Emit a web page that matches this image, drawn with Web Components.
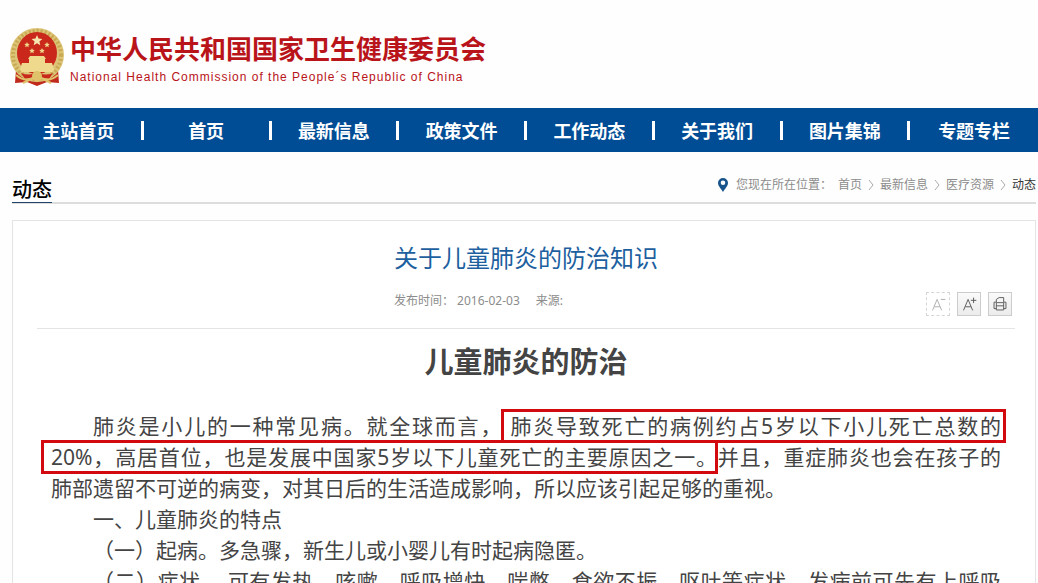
<!DOCTYPE html>
<html lang="zh-CN">
<head>
<meta charset="utf-8">
<meta name="viewport" content="width=device-width, initial-scale=1">
<title>关于儿童肺炎的防治知识</title>
<style>
    :root {
        --color-brand: #004c95;
        --color-red: #b9141a;
        --color-mark: #d20a10;
        --color-title: #1d5f9f;
        --color-text: #444;
        --color-muted: #8c8c8c;
        --color-border: #e4e4e4;
    }
    body {
        margin: 0;
        height: 100vh;
        overflow: hidden;
        background: #fefefe;
        color: var(--color-text);
        font-family: "Noto Sans", "Noto Sans CJK SC", sans-serif;
    }
    main {
        padding: 0 2px 0 12px;
    }
</style>
</head>
<body>
<site-header>
    <span slot="name">中华人民共和国国家卫生健康委员会</span>
    <span slot="subtitle">National Health Commission of the People´s Republic of China</span>
</site-header>

<site-nav items="主站首页,首页,最新信息,政策文件,工作动态,关于我们,图片集锦,专题专栏"></site-nav>

<main>
    <section-bar heading="动态">
        <crumb-trail items="首页,最新信息,医疗资源,动态"></crumb-trail>
    </section-bar>

    <article-card>
        <span slot="title">关于儿童肺炎的防治知识</span>
        <span slot="published">发布时间： 2016-02-03</span>
        <span slot="source">来源:</span>
        <tool-button slot="tools" kind="smaller"></tool-button>
        <tool-button slot="tools" kind="larger"></tool-button>
        <tool-button slot="tools" kind="print"></tool-button>
        <article-body heading="儿童肺炎的防治">
            <text-block>肺炎是小儿的一种常见病。就全球而言，<marked-text>肺炎导致死亡的病例约占5岁以下小儿死亡总数的</marked-text><wbr><marked-text class="start"><keep-together>20%，高居</keep-together>首位，也是发展中国家5岁以下儿童死亡的主要原因之一。</marked-text>并且，重症肺炎也会在孩子的<keep-together>肺部遗留</keep-together>不可逆的病变，对其日后的生活造成影响，所以应该引起足够的重视。</text-block>
            <text-block>一、儿童肺炎的特点</text-block>
            <text-block>（一）起病。多急骤，新生儿或小婴儿有时起病隐匿。</text-block>
            <text-block fill>（二）症状。 可有发热、咳嗽、呼吸增快、喘憋、食欲不振、呕吐等症状，发病前可先有上呼吸</text-block>
        </article-body>
    </article-card>
</main>

<script>
class SiteHeader extends HTMLElement {
    constructor() {
        super();
        this.attachShadow({ mode: 'open' });
    }

    connectedCallback() {
        this.shadowRoot.innerHTML = `
            <style>
                :host {
                    display: block;
                }
                header {
                    display: flex;
                    align-items: center;
                    gap: 5px;
                    padding: 26px 9px 20px;
                    color: var(--color-red);
                }
                svg {
                    width: 56px;
                    height: 62px;
                }
                .names {
                    padding-top: 5px;
                }
                h1 {
                    margin: 0;
                    font: bold 26px/30px "Noto Sans CJK SC", sans-serif;
                }
                p {
                    margin: 4px 0 0;
                    font: 12px/20px "Liberation Sans", sans-serif;
                    letter-spacing: 1px;
                }
            </style>
            <header>
                <svg viewBox="0 0 56 62" aria-hidden="true">
                    <path d="M7 44 L6 57 L18 56 L28 60 L38 56 L50 57 L49 44Z" fill="#c02a1c"/>
                    <ellipse cx="28" cy="29" rx="27" ry="27" fill="#dcc478"/>
                    <ellipse cx="28" cy="29" rx="24" ry="24" fill="none" stroke="#c9aa52" stroke-width="4" stroke-dasharray="2 2"/>
                    <ellipse cx="28" cy="27" rx="20" ry="21" fill="#c9281b"/>
                    <path d="M28 9l1.5 3.6 3.9.3-3 2.5.9 3.8-3.3-2-3.3 2 .9-3.8-3-2.5 3.9-.3z" fill="#f6e7b0"/>
                    <g fill="#efd98c">
                        <path id="s" d="M18 16l.8 1.800 2 .2-1.500 1.300.5 2-1.800-1.100-1.800 1.100.5-2-1.500-1.300 2-.2z"/>
                        <use href="#s" x="20"/>
                        <use href="#s" x="5" y="6"/>
                        <use href="#s" x="15" y="6"/>
                        <path d="M21 30h14l2 3h-18zM20 33h16v4H20zM13 37h30l2 6H11z"/>
                        <path d="M10 43h36l-3 3H13z"/>
                    </g>
                    <path d="M12 47q8 3 13 0l3 2 3-2q5 3 13 0l-4 6-12-2-12 2z" fill="#c9281b"/>
                    <circle cx="28" cy="50" r="5" fill="#dfc269"/>
                    <path d="M7 49q8 7 17 3l4 3 4-3q9 4 17-3M14 57l8-4M42 57l-8-4" fill="none" stroke="#dfc269" stroke-width="2"/>
                </svg>
                <div class="names">
                    <h1><slot name="name"></slot></h1>
                    <p><slot name="subtitle"></slot></p>
                </div>
            </header>
        `;
    }
}

class SiteNav extends HTMLElement {
    constructor() {
        super();
        this.attachShadow({ mode: 'open' });
    }

    connectedCallback() {
        const items = this.getAttribute('items').split(',');
        this.shadowRoot.innerHTML = `
            <style>
                :host {
                    display: block;
                    background: var(--color-brand);
                    color: #fff;
                    font: bold 18px/44px "Noto Sans CJK SC", sans-serif;
                }
                ul {
                    display: grid;
                    grid-template-columns: repeat(${items.length}, 1fr);
                    margin: 0;
                    padding: 0 0 0 16px;
                    list-style: none;
                }
                li {
                    display: flex;
                    height: 44px;
                }
                a {
                    flex: 1;
                    color: inherit;
                    text-align: center;
                    text-decoration: none;
                }
                li:not(:last-child)::after {
                    content: "";
                    align-self: center;
                    width: 3px;
                    height: 19px;
                    background: #fff;
                }
            </style>
            <nav><ul>${items.map(item => `<li><a href="#">${item}</a></li>`).join('')}</ul></nav>
        `;
    }
}

class SectionBar extends HTMLElement {
    constructor() {
        super();
        this.attachShadow({ mode: 'open' });
    }

    connectedCallback() {
        this.shadowRoot.innerHTML = `
            <style>
                :host {
                    display: flex;
                    justify-content: space-between;
                    height: 50px;
                    border-bottom: 2px solid #ddd;
                }
                h2 {
                    align-self: flex-end;
                    margin: 0 0 -1px;
                    border-bottom: 1px solid #1f4468;
                    color: #000;
                    font: 500 20px/27px "Noto Sans CJK SC", sans-serif;
                }
            </style>
            <h2>${this.getAttribute('heading')}</h2>
            <slot></slot>
        `;
    }
}

class CrumbTrail extends HTMLElement {
    constructor() {
        super();
        this.attachShadow({ mode: 'open' });
    }

    connectedCallback() {
        const items = this.getAttribute('items').split(',');
        this.shadowRoot.innerHTML = `
            <style>
                :host {
                    display: block;
                    padding-top: 23px;
                    color: var(--color-muted);
                    font-size: 12px;
                    line-height: 20px;
                }
                nav, ol, li {
                    display: flex;
                    align-items: center;
                }
                ol {
                    margin: 0;
                    padding: 0;
                    list-style: none;
                }
                .pin {
                    width: 10px;
                    height: 14px;
                    margin-right: 8px;
                }
                .label {
                    margin-right: 6px;
                }
                .arrow {
                    width: 6px;
                    height: 10px;
                    margin: 0 6px;
                }
                a {
                    color: inherit;
                    text-decoration: none;
                }
                li:last-child {
                    color: #333;
                }
            </style>
            <nav>
                <svg class="pin" viewBox="0 0 10 14" aria-hidden="true">
                    <path fill-rule="evenodd" d="M5 0a5 5 0 0 1 5 5c0 3-3 5.500-5 9-2-3.500-5-6-5-9a5 5 0 0 1 5-5zm0 2.500a2.300 2.300 0 1 0 0 4.600 2.300 2.300 0 0 0 0-4.600z" fill="#17548c"/>
                </svg>
                <span class="label">您现在所在位置：</span>
                <ol>${items.map((item, i) => `<li>${i ? '<svg class="arrow" viewBox="0 0 6 10" aria-hidden="true"><path d="M1 0l4 5-4 5" fill="none" stroke="#aaa"/></svg>' : ''}<a href="#">${item}</a></li>`).join('')}</ol>
            </nav>
        `;
    }
}

class ArticleCard extends HTMLElement {
    constructor() {
        super();
        this.attachShadow({ mode: 'open' });
    }

    connectedCallback() {
        this.shadowRoot.innerHTML = `
            <style>
                :host {
                    display: block;
                    margin-top: 16px;
                    padding: 0 20px 0 24px;
                    border: 1px solid var(--color-border);
                    background: #fff;
                }
                header {
                    display: grid;
                    grid-template-columns: 1fr auto 1fr;
                    border-bottom: 1px solid var(--color-border);
                    padding: 18px 0 12px;
                }
                h1 {
                    grid-column: 2;
                    margin: 0;
                    color: var(--color-title);
                    font: 24px/36px "Noto Sans CJK SC", sans-serif;
                }
                .meta {
                    grid-column: 2;
                    display: flex;
                    gap: 16px;
                    padding: 16px 0 5px;
                    color: var(--color-muted);
                    font-size: 12px;
                    line-height: 20px;
                }
                .tools {
                    grid-column: 3;
                    display: flex;
                    justify-content: flex-end;
                    align-self: end;
                    gap: 7px;
                    padding-right: 3px;
                }
            </style>
            <article>
                <header>
                    <h1><slot name="title"></slot></h1>
                    <div class="meta"><slot name="published"></slot><slot name="source"></slot></div>
                    <div class="tools"><slot name="tools"></slot></div>
                </header>
                <slot></slot>
            </article>
        `;
    }
}

const TOOLS = {
    smaller: {
        label: '缩小字体',
        icon: '<path d="M6 19l5-12 5 12M8 15h6M15 7h5"/>'
    },
    larger: {
        label: '放大字体',
        icon: '<path d="M6 19l5-12 5 12M8 15h6M14 8h6M17 5v6"/>'
    },
    print: {
        label: '打印',
        icon: '<path d="M8 10V7l3-2h5v5M8 10H5.500v7H8M16 10h2.500v7H16M8 10.500h8v8H8zM8 14h8"/>'
    }
};

class ToolButton extends HTMLElement {
    constructor() {
        super();
        this.attachShadow({ mode: 'open' });
    }

    connectedCallback() {
        const tool = TOOLS[this.getAttribute('kind')];
        this.shadowRoot.innerHTML = `
            <style>
                :host {
                    display: block;
                }
                button {
                    display: block;
                    width: 24px;
                    height: 24px;
                    padding: 0;
                    border: 1px solid #ccc;
                    background: linear-gradient(#fafafa, #ececec);
                    color: #555;
                }
                svg {
                    display: block;
                    width: 22px;
                    height: 22px;
                    fill: none;
                    stroke: currentColor;
                }
                :host([kind="smaller"]) button {
                    border: 1px dashed #d5d5d5;
                    background: #fff;
                    color: #aaa;
                }
            </style>
            <button type="button" aria-label="${tool.label}"><svg viewBox="0 0 24 24">${tool.icon}</svg></button>
        `;
    }
}

class ArticleBody extends HTMLElement {
    constructor() {
        super();
        this.attachShadow({ mode: 'open' });
    }

    connectedCallback() {
        this.shadowRoot.innerHTML = `
            <style>
                :host {
                    display: block;
                    padding: 10px 14px 0;
                    font-size: 21px;
                    line-height: 31px;
                }
                h2 {
                    margin: 0 0 30px;
                    font: bold 29px/42px "Noto Sans CJK SC", sans-serif;
                    text-align: center;
                }
            </style>
            <h2>${this.getAttribute('heading')}</h2>
            <slot></slot>
        `;
    }
}

class TextBlock extends HTMLElement {
    constructor() {
        super();
        this.attachShadow({ mode: 'open' });
    }

    connectedCallback() {
        this.shadowRoot.innerHTML = `
            <style>
                :host {
                    display: block;
                }
                p {
                    margin: 0;
                    text-align: justify;
                    text-indent: 2em;
                }
                :host([fill]) p {
                    text-align-last: justify;
                }
            </style>
            <p><slot></slot></p>
        `;
    }
}

class MarkedText extends HTMLElement {
    constructor() {
        super();
        this.attachShadow({ mode: 'open' });
    }

    connectedCallback() {
        this.shadowRoot.innerHTML = `
            <style>
                :host {
                    display: inline;
                    position: relative;
                }
                /* frame drawn over the line, so it takes no room in the text */
                :host::after {
                    content: "";
                    position: absolute;
                    inset: -3px -5px -3px -2px;
                    border: 3px solid var(--color-mark);
                }
                :host(.start)::after {
                    left: -10px;
                    right: 0;
                }
            </style><slot></slot>`;
    }
}

class KeepTogether extends HTMLElement {
    constructor() {
        super();
        this.attachShadow({ mode: 'open' });
    }

    connectedCallback() {
        this.shadowRoot.innerHTML = `<style>:host { display: inline; white-space: nowrap; }</style><slot></slot>`;
    }
}

customElements.define('site-header', SiteHeader);
customElements.define('site-nav', SiteNav);
customElements.define('section-bar', SectionBar);
customElements.define('crumb-trail', CrumbTrail);
customElements.define('article-card', ArticleCard);
customElements.define('tool-button', ToolButton);
customElements.define('article-body', ArticleBody);
customElements.define('text-block', TextBlock);
customElements.define('marked-text', MarkedText);
customElements.define('keep-together', KeepTogether);
</script>
</body>
</html>
